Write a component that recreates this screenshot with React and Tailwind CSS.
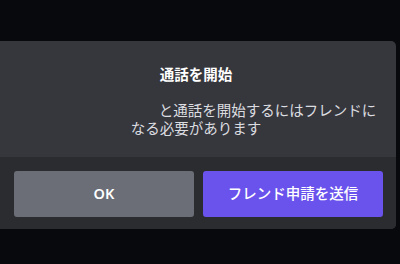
import React from 'react';

const FONT = { fontFamily: '"Noto Sans", "Noto Sans CJK JP", sans-serif' };

const CallDialog = () => {
  return (
    <div className="w-[400px] h-[264px] overflow-hidden bg-[#08090c] pt-[41px]" style={FONT}>
      <div className="w-[400px] -ml-[4px] rounded-[5px] overflow-hidden bg-[#36373c]">
        {/* Body */}
        <div className="px-[18px] pt-[24px] pb-[20px] text-center">
          <h2 className="text-[14.5px] leading-[18px] font-bold text-white">通話を開始</h2>
          <p className="mt-[18px] text-[14.5px] leading-[18px] text-[#dcdde0]">
            <span className="inline-block w-[143px]" />
            と通話を開始するにはフレンドになる必要があります
          </p>
        </div>

        {/* Footer */}
        <div className="bg-[#2b2c30] pl-[18px] pr-[13px] pt-[14px] pb-[12px] flex gap-[9px]">
          <button className="flex-1 h-[46px] rounded-[3px] bg-[#6b6e76] text-white text-[14.5px] font-semibold">
            OK
          </button>
          <button className="flex-1 h-[46px] rounded-[3px] bg-[#6a52ec] text-white text-[14.5px] font-medium">
            フレンド申請を送信
          </button>
        </div>
      </div>
    </div>
  );
};

export default function App() {
  return <CallDialog />;
}
